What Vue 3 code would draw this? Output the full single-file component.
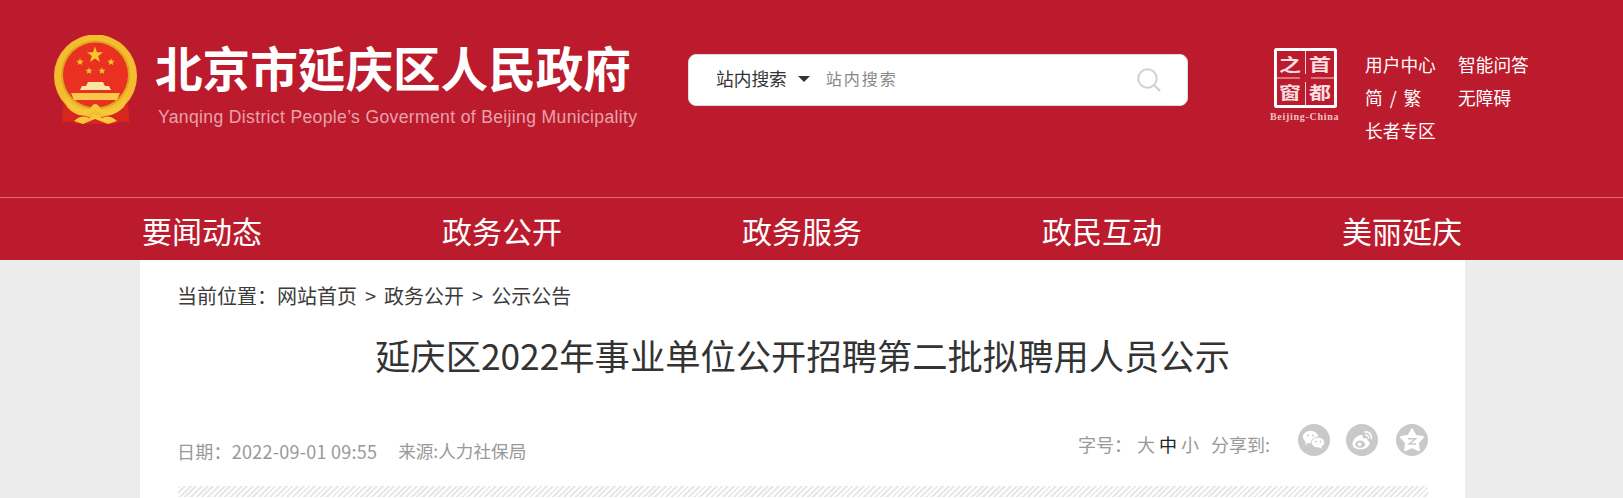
<template>
  <div class="page">
    <header class="top">
      <div class="top__inner">
        <a class="brand">
          <svg class="emblem" width="85" height="90" viewBox="0 0 85 90">
            <path d="M11 66 Q8 78 10 88 Q16 84 23 89 L62 89 Q69 84 76 88 Q77 78 74 66 Z" fill="#d8261f" />
            <circle cx="42.5" cy="41" r="41.5" fill="#f4bc2e" />
            <circle cx="42.5" cy="40" r="34.5" fill="#dba51f" />
            <circle cx="42.5" cy="40" r="32.5" fill="#ea3020" />
            <g fill="#f6c52f">
              <polygon :points="star(42, 20, 8.5)" />
              <polygon :points="star(27, 27, 4)" />
              <polygon :points="star(58, 27, 4)" />
              <polygon :points="star(36, 36, 3.8)" />
              <polygon :points="star(49, 36, 3.8)" />
            </g>
            <path d="M35 47 H50 L52 51 H56 L58 55 H27 L29 51 H33 Z" fill="#fbe4a8" />
            <rect x="29" y="55" width="27" height="3" fill="#ea3020" />
            <path d="M18 58 H67 L64 65 H21 Z" fill="#f7c84a" />
            <path d="M12 62 Q25 78 37 74 Q42 64 48 74 Q60 78 73 62 L71 72 Q58 84 49 79 L42 75 L36 79 Q25 84 14 72 Z" fill="#f8c63a" />
            <path d="M21 86 Q29 79 36 83 L42 79 L49 83 Q56 79 64 86 L55 89 L42 84 L30 89 Z" fill="#f8c63a" />
          </svg>
          <div class="brand__text">
            <div class="brand__name">北京市延庆区人民政府</div>
            <div class="brand__en">Yanqing District People’s Goverment of Beijing Municipality</div>
          </div>
        </a>

        <div class="search">
          <span class="search__scope">站内搜索</span>
          <i class="search__arrow"></i>
          <span class="search__input">站内搜索</span>
          <svg class="search__icon" width="24" height="24" viewBox="0 0 24 24" fill="none" stroke="#d2d2d2">
            <circle cx="10.5" cy="10.5" r="9.2" stroke-width="2" />
            <path d="M17.5 17.5 L23 23" stroke-width="2.4" />
          </svg>
        </div>

        <div class="capital">
          <svg class="capital__box" width="63" height="60" viewBox="0 0 63 60">
            <rect x="1.5" y="1.5" width="60" height="57" fill="none" stroke="#fff" stroke-width="3" rx="1" />
            <path d="M31.5 3 V26 M31.5 34 V57 M3 30 H26 M37 30 H60" stroke="#f4cfd3" stroke-width="1" />
            <text transform="translate(16 23) scale(1 .8)" class="capital__glyph">之</text>
            <text transform="translate(46 23) scale(1 .8)" class="capital__glyph">首</text>
            <text transform="translate(16 51) scale(1 .8)" class="capital__glyph">窗</text>
            <text transform="translate(46 51) scale(1 .8)" class="capital__glyph">都</text>
          </svg>
          <div class="capital__en">Beijing-China</div>
        </div>

        <ul class="tools">
          <li v-for="item in tools" :key="item">{{ item }}</li>
        </ul>
      </div>
    </header>

    <nav class="nav">
      <a v-for="item in navItems" :key="item" class="nav__item">{{ item }}</a>
    </nav>

    <main class="article">
      <div class="crumbs">
        <span>当前位置：</span><span>网站首页</span><span class="crumbs__sep">&gt;</span><span>政务公开</span><span class="crumbs__sep">&gt;</span><span>公示公告</span>
      </div>
      <h1 class="article__title">延庆区2022年事业单位公开招聘第二批拟聘用人员公示</h1>
      <div class="meta">
        <div class="meta__left">
          <span class="meta__date">日期：2022-09-01 09:55</span>
          <span class="meta__source">来源:人力社保局</span>
        </div>
        <div class="meta__right">
          <span class="meta__label">字号：</span>
          <span class="size">大</span>
          <span class="size size--on">中</span>
          <span class="size">小</span>
          <span class="meta__share">分享到:</span>
          <a class="share">
            <svg width="32" height="32" viewBox="0 0 32 32" fill="#fff">
              <ellipse cx="12.5" cy="13" rx="7.5" ry="6.2" />
              <path d="M8 17 L7 21 L12 18 Z" />
              <ellipse cx="20" cy="18.5" rx="6.6" ry="5.4" stroke="#c9c9c9" stroke-width="1" />
              <path d="M23 22.5 L24.5 25 L20 23 Z" />
              <circle cx="10" cy="11.5" r="1" fill="#c9c9c9" />
              <circle cx="15" cy="11.5" r="1" fill="#c9c9c9" />
              <circle cx="18" cy="17.5" r="0.9" fill="#c9c9c9" />
              <circle cx="22.5" cy="17.5" r="0.9" fill="#c9c9c9" />
            </svg>
          </a>
          <a class="share">
            <svg width="32" height="32" viewBox="0 0 32 32" fill="none">
              <path d="M6.5 20 C6.5 15.5 11.5 11 15 11 C17 11 17.3 12.8 16.7 14.6 C19.5 13.4 22 14 21.6 16.6 C24 17.4 24.2 19.6 22.8 21.4 C20.6 24.4 16.6 25.6 13 25.2 C9.4 24.8 6.5 23.2 6.5 20 Z" fill="#fff" />
              <ellipse cx="14.2" cy="20.2" rx="5" ry="3.6" fill="#c9c9c9" />
              <circle cx="13.6" cy="20.4" r="1.8" fill="#fff" />
              <path d="M19 8 C22.5 7.4 26 10.4 25.4 14.4" stroke="#fff" stroke-width="1.7" stroke-linecap="round" />
              <path d="M19.6 11 C21.4 10.8 22.8 12.2 22.5 14" stroke="#fff" stroke-width="1.4" stroke-linecap="round" />
            </svg>
          </a>
          <a class="share share--last">
            <svg width="32" height="32" viewBox="0 0 32 32">
              <path d="M16 5 L19.8 11.6 L27.5 13 L22.2 18.7 L23.2 26.5 L16 23.2 L8.8 26.5 L9.8 18.7 L4.5 13 L12.2 11.6 Z" fill="#fff" stroke="#fff" stroke-width="1.5" stroke-linejoin="round" />
              <path d="M12 14.8 H19.6 L13.2 20 H20" fill="none" stroke="#c9c9c9" stroke-width="1.5" />
            </svg>
          </a>
        </div>
      </div>
      <div class="stripe"></div>
    </main>
  </div>
</template>

<script setup>
const tools = ['用户中心', '智能问答', '简 / 繁', '无障碍', '长者专区']
const navItems = ['要闻动态', '政务公开', '政务服务', '政民互动', '美丽延庆']

// five pointed star, used in the emblem
function star(cx, cy, r) {
  const pts = []
  for (let i = 0; i < 10; i++) {
    const rad = i % 2 ? r * 0.4 : r
    const a = (Math.PI / 5) * i - Math.PI / 2
    pts.push((cx + rad * Math.cos(a)).toFixed(2) + ',' + (cy + rad * Math.sin(a)).toFixed(2))
  }
  return pts.join(' ')
}
</script>

<style>
html,
body {
  margin: 0;
  background: #ececec;
  overflow: hidden;
}
</style>

<style scoped>
.page {
  font-family: "Noto Sans CJK SC", "Liberation Sans", sans-serif;
  height: 498px;
  overflow: hidden;
}

.top {
  background: #bc1b2d;
  height: 197px;
  border-bottom: 1px solid #e06a78;
}
.top__inner {
  display: flex;
  align-items: flex-start;
  padding-left: 53px;
}

.brand {
  display: flex;
  width: 635px;
  padding-top: 35px;
}
.emblem {
  flex: none;
}
.brand__text {
  margin-left: 17px;
}
.brand__name {
  color: #fff;
  font-size: 47.6px;
  font-weight: 700;
  line-height: 60px;
  margin-top: 2px;
  white-space: nowrap;
}
.brand__en {
  color: #e7a3ac;
  font-family: "Liberation Sans", sans-serif;
  font-size: 17.6px;
  letter-spacing: 0.33px;
  line-height: 20px;
  margin: 10px 0 0 3px;
  white-space: nowrap;
}

.search {
  display: flex;
  align-items: center;
  box-sizing: border-box;
  width: 500px;
  height: 52px;
  margin-top: 54px;
  padding: 0 26px 0 27px;
  background: #fff;
  border: 1px solid #d9dde0;
  border-radius: 8px;
}
.search__scope {
  color: #333;
  font-size: 17.7px;
  margin-top: -4px;
}
.search__arrow {
  width: 0;
  height: 0;
  margin: -2px 0 0 11px;
  border-style: solid;
  border-width: 6px 6px 0;
  border-color: #333 transparent transparent;
}
.search__input {
  color: #888;
  font-size: 16px;
  letter-spacing: 2px;
  margin: -4px 0 0 16px;
}
.search__icon {
  margin-left: auto;
}

.capital {
  width: 69px;
  margin: 48px 0 0 86px;
  flex: none;
}
.capital__box {
  display: block;
}
.capital__glyph {
  fill: #f8dfe2;
  font-size: 22px;
  font-weight: 700;
  font-family: "Noto Sans CJK SC", sans-serif;
  text-anchor: middle;
}
.capital__en {
  color: #efc3c8;
  font-family: "Liberation Serif", serif;
  font-size: 10px;
  font-weight: 700;
  line-height: 12px;
  margin: 3px 0 0 -4px;
  white-space: nowrap;
  letter-spacing: 0.7px;
}

.tools {
  display: grid;
  grid-template-columns: 93px 93px;
  grid-auto-rows: 33px;
  list-style: none;
  margin: 48px 0 0 22px;
  padding: 0;
  color: #fff;
  font-size: 17.7px;
  line-height: 33px;
  white-space: nowrap;
  word-spacing: 3px;
}

.nav {
  display: flex;
  background: #bc1b2d;
  height: 62px;
  padding-left: 52px;
}
.nav__item {
  width: 300px;
  color: #fff;
  font-size: 30px;
  line-height: 64px;
  height: 62px;
  overflow: hidden;
  text-align: center;
}

.article {
  box-sizing: border-box;
  width: 1325px;
  height: 238px;
  margin-left: 140px;
  padding: 0 37px 0 37px;
  background: #fff;
}
.crumbs {
  color: #3c3c3c;
  font-size: 20px;
  line-height: 26px;
  padding-top: 23px;
}
.crumbs__sep {
  margin: 0 8px;
}
.article__title {
  color: #333;
  font-size: 35.3px;
  font-weight: 400;
  line-height: 50px;
  margin: 21px 0 0;
  text-align: center;
}
.meta {
  display: flex;
  justify-content: space-between;
  align-items: flex-start;
  color: #999;
  font-size: 18px;
  line-height: 26px;
  height: 62px;
  margin-top: 44px;
}
.meta__left {
  display: flex;
  gap: 21px;
  padding-top: 14px;
}
.meta__date {
  letter-spacing: 0.25px;
}
.meta__source {
  font-size: 17.6px;
}
.meta__right {
  display: flex;
  align-items: flex-start;
}
.meta__right > span {
  padding-top: 7px;
}
.meta__label {
  margin-right: 5px;
}
.size {
  margin-right: 4px;
}
.size--on {
  color: #222;
}
.meta__share {
  margin-left: 8px;
  margin-right: 12px;
}
.share {
  width: 32px;
  height: 32px;
  margin-left: 16px;
  background: #c9c9c9;
  border-radius: 50%;
  flex: none;
}
.share--last {
  margin-left: 18px;
}
.share svg {
  display: block;
}
.stripe {
  height: 11px;
  margin-left: 1px;
  background: repeating-linear-gradient(135deg, #e8e8e8 0 2px, #fff 2px 4px);
}
</style>
